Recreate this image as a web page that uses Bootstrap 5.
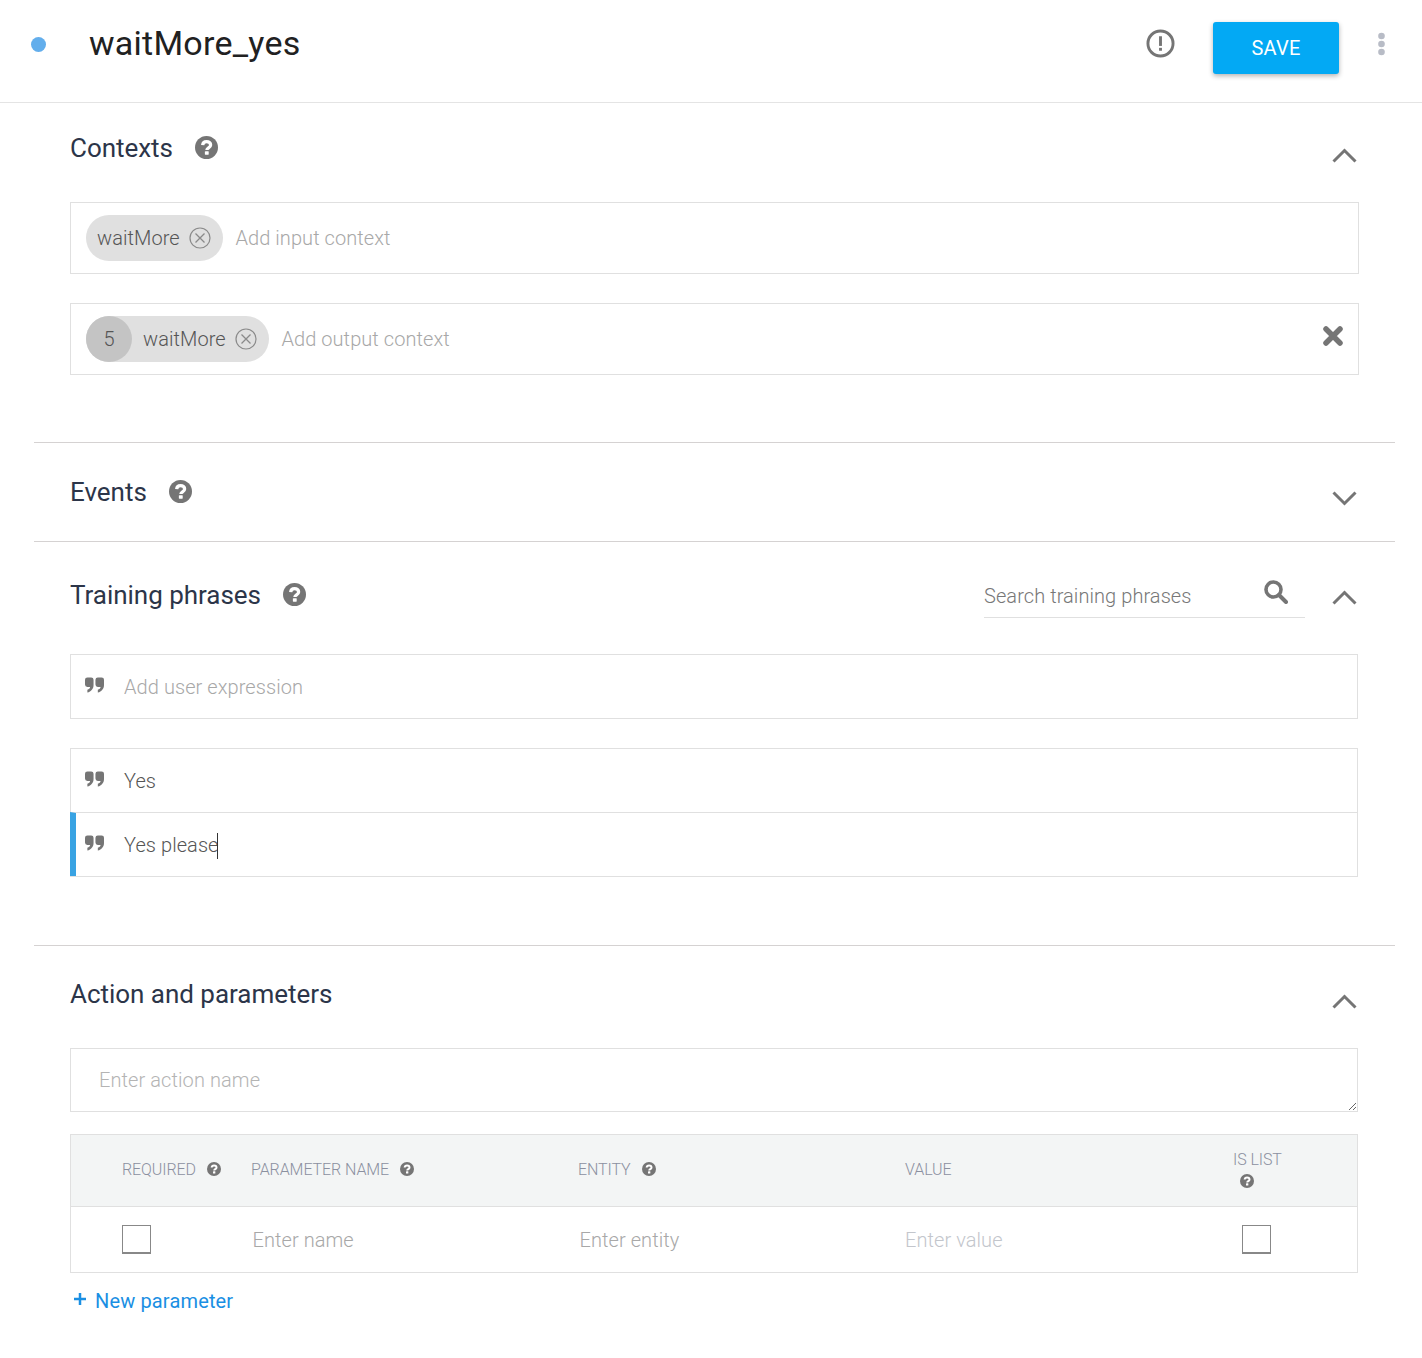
<!DOCTYPE html>
<html lang="en">
<head>
  <meta charset="UTF-8" />
  <title>waitMore_yes</title>
  <link rel="stylesheet" href="https://cdn.jsdelivr.net/npm/bootstrap@5.3.3/dist/css/bootstrap.min.css">
  <style>
    body { font-family: Roboto, "Liberation Sans", sans-serif; font-weight: 300; letter-spacing: .07px; color: #555; background: #fff; }
    .top-bar { height: 103px; border-bottom: 1px solid #e4e4e4; padding-right: 37px; }
    .status-dot { width: 15px; height: 15px; margin: 37px 0 0 31px; border-radius: 50%; background: #63aeec; }
    .intent-name { margin: 21px 0 0 43px; font-size: 34px; line-height: 44px; font-weight: 400; letter-spacing: .25px; color: #212121; }
    .issue-icon { width: 29px; height: 29px; margin-top: 29px; }
    .save-btn { width: 126px; height: 52px; margin: 22px 0 0 38px; padding: 0; font-size: 20px; line-height: 52px; letter-spacing: .2px; background: #03a9f4; border: 0; border-radius: 3px; box-shadow: 0 2px 5px rgba(0,0,0,.3); }
    .kebab-icon { width: 7px; height: 24px; margin: 32px 0 0 39px; }

    .editor { margin: 0 27px 0 34px; }
    .editor-sec { padding: 0 36px; border-top: 1px solid #d5d2d2; }
    .editor-sec.first-sec { border-top: 0; padding-bottom: 67px; }
    .sec-head { align-items: flex-start; }
    .sec-title { margin: 0; font-size: 26px; line-height: 36px; font-weight: 400; letter-spacing: -.03px; color: #2c3549; }
    .help-big { width: 23px; height: 23px; margin: 6px 0 0 22px; }
    .chevron { width: 25px; height: 15px; margin-right: 2px; }
    .head-contexts { height: 99px; padding-top: 27px; }
    .head-contexts .chevron { margin-top: 18px; }
    .head-events { height: 98px; padding-top: 31px; }
    .head-events .chevron { margin-top: 17px; }
    .head-training { height: 112px; padding-top: 35px; }
    .head-training .chevron { margin-top: 13px; }
    .head-action { height: 102px; padding-top: 30px; }
    .head-action .chevron { margin-top: 18px; }

    .line-box { height: 72px; padding: 0 15px; border: 1px solid #e0e0e0; }
    .line-box + .line-box { margin-top: 29px; }
    .ctx-chip { height: 46px; padding: 0 12px 0 11px; border-radius: 23px; background: #e0e0e0; font-size: 20px; }
    .ctx-chip.with-count { padding-left: 0; }
    .chip-count { width: 46px; height: 46px; margin-right: 11px; border-radius: 50%; background: #c4c4c4; }
    .chip-x { width: 22px; height: 22px; margin-left: 9.700px; }
    .plain-field { flex: 1; min-width: 0; padding: 0; border: 0; border-radius: 0; background: transparent; color: #555; font-size: 20px; font-weight: 300; letter-spacing: .07px; box-shadow: none !important; }
    .plain-field::placeholder { color: #a8a8a8; opacity: 1; }
    .plain-field.pale::placeholder { color: #c3c6cc; }
    .clear-x { width: 20px; height: 20px; margin-bottom: 6px; }

    .search-wrap { width: 321px; height: 41px; margin-right: 27px; padding-bottom: 2px; border-bottom: 1px solid #e0e0e0; }
    .search-wrap .plain-field::placeholder { color: #777; }
    .search-icon { width: 24px; height: 24px; margin: 3px 17px 0 0; flex: none; }
    .phrase-box { margin-right: 1px; border: 1px solid #e0e0e0; }
    .phrase-row { height: 63px; padding-left: 14px; }
    .phrase-row + .phrase-row { border-top: 1px solid #e0e0e0; height: 64px; }
    .phrase-row.active-row { margin-left: -1px; border-left: 6px solid #39a3e3; padding-left: 9px; }
    .quote-icon { width: 19px; height: 16px; margin: 0 20px 4px 0; flex: none; }
    .phrase-text { font-size: 20px; white-space: nowrap; }
    .text-caret { display: inline-block; width: 1px; height: 26px; margin: 0 0 -7px -2px; background: #333; }
    .gap-box { margin-bottom: 29px; }
    .gap-box .phrase-row { height: 63px; }
    .bottom-gap { height: 68px; }

    .action-field { display: block; width: 1288px; height: 64px; padding: 19px 28px 17px; border: 1px solid #e0e0e0; border-radius: 0; font-size: 20px; line-height: 24px; font-weight: 300; letter-spacing: .09px; color: #555; box-shadow: none !important; }
    .action-field::placeholder { color: #b4b4b4; opacity: 1; }
    .param-table { width: 1288px; margin: 22px 0 0; table-layout: fixed; border: 1px solid #e0e0e0; letter-spacing: -.08px; }
    .param-table th, .param-table td { padding: 0; border-bottom: 1px solid #e0e0e0; vertical-align: middle; box-shadow: none; }
    .param-table th { height: 72px; padding-bottom: 2px; background: #f3f5f5; font-size: 16px; font-weight: 300; line-height: 20px; color: #8b90a0; }
    .param-table td { height: 66px; border-bottom: 0; }
    .col-req { width: 180.500px; }
    .col-mid { width: 327px; }
    .pad-req { padding-left: 51px !important; }
    .pad-name { padding-left: 1.500px !important; }
    .param-table th.pad-list { padding: 0 0 4px 1px; }
    .help-small { width: 14px; height: 14px; margin: -2px 0 0 11px; }
    .help-under { display: block; margin: 4px 0 0 7px; }
    .tick-box { width: 29px; height: 29px; display: block; border: 1px solid #888; border-bottom-width: 2px; background: #fff; }
    .tick-list { margin-left: 10px; }
    .new-param { margin-top: 14px; margin-left: 3px; font-size: 20px; line-height: 28px; font-weight: 400; letter-spacing: .15px; color: #1a8fe3; text-decoration: none; }
    .plus-icon { width: 14px; height: 14px; margin: 0 8px 5px 0; }
  </style>
</head>
<body>
  <svg width="0" height="0" class="position-absolute">
    <symbol id="i-help" viewBox="0 0 24 24">
      <circle cx="12" cy="12" r="12" fill="#757575"/>
      <path d="M8 9.500C8.200 6.900 10 5.800 12.100 5.800c2.500 0 4.200 1.500 4.200 3.500 0 3-3.900 2.900-3.900 5.200" fill="none" stroke="#fff" stroke-width="3.400"/>
      <rect x="10.300" y="16" width="4" height="3.600" rx=".5" fill="#fff"/>
    </symbol>
    <symbol id="i-chip-x" viewBox="0 0 22 22">
      <circle cx="11" cy="11" r="10" fill="none" stroke="#8a8a8a" stroke-width="1.200"/>
      <path d="M6.500 6.500l9 9M15.500 6.500l-9 9" stroke="#8a8a8a" stroke-width="1.300"/>
    </symbol>
    <symbol id="i-quote" viewBox="0 0 20 16">
      <path id="q-mark" d="M0 2.500A2.500 2.500 0 0 1 2.500 0h4A2.500 2.500 0 0 1 9 2.500V8c0 4-2.500 7-6.500 8v-3c1.700-.6 2.700-1.600 2.900-3H2.500A2.500 2.500 0 0 1 0 7.500z" fill="#757575"/>
      <use href="#q-mark" x="11"/>
    </symbol>
  </svg>

  <!-- top bar -->
  <header class="top-bar d-flex align-items-start">
    <span class="status-dot"></span>
    <h1 class="intent-name">waitMore_yes</h1>
    <svg class="issue-icon ms-auto" viewBox="0 0 30 30">
      <circle cx="15" cy="15" r="13" fill="none" stroke="#757575" stroke-width="3"/>
      <rect x="13.500" y="7.500" width="3" height="10" fill="#757575"/>
      <rect x="13.500" y="19.500" width="3" height="3" fill="#757575"/>
    </svg>
    <button class="btn btn-primary save-btn">SAVE</button>
    <svg class="kebab-icon" viewBox="0 0 7 24">
      <circle cx="3.500" cy="4" r="3.300" fill="#b8bcc6"/>
      <circle cx="3.500" cy="12" r="3.300" fill="#b8bcc6"/>
      <circle cx="3.500" cy="20" r="3.300" fill="#b8bcc6"/>
    </svg>
  </header>

  <main class="editor">
    <!-- Contexts -->
    <section class="editor-sec first-sec">
      <div class="sec-head head-contexts d-flex">
        <h2 class="sec-title">Contexts</h2>
        <svg class="help-big"><use href="#i-help"/></svg>
        <svg class="chevron ms-auto" viewBox="0 0 25 15"><path d="M1.500 13.500l11-11 11 11" fill="none" stroke="#757575" stroke-width="3"/></svg>
      </div>
      <div class="line-box d-flex align-items-center">
        <span class="ctx-chip d-inline-flex align-items-center">waitMore<svg class="chip-x"><use href="#i-chip-x"/></svg></span>
        <input class="form-control plain-field ms-2 ps-1" placeholder="Add input context">
      </div>
      <div class="line-box d-flex align-items-center">
        <span class="ctx-chip with-count d-inline-flex align-items-center"><span class="chip-count d-flex align-items-center justify-content-center">5</span>waitMore<svg class="chip-x"><use href="#i-chip-x"/></svg></span>
        <input class="form-control plain-field ms-2 ps-1" placeholder="Add output context">
        <svg class="clear-x" viewBox="0 0 20 20"><path d="M3 3l14 14M17 3L3 17" stroke="#757575" stroke-width="5.500" stroke-linecap="round"/></svg>
      </div>
    </section>

    <!-- Events -->
    <section class="editor-sec">
      <div class="sec-head head-events d-flex">
        <h2 class="sec-title">Events</h2>
        <svg class="help-big"><use href="#i-help"/></svg>
        <svg class="chevron ms-auto" viewBox="0 0 25 15"><path d="M1.500 1.500l11 11 11-11" fill="none" stroke="#757575" stroke-width="3"/></svg>
      </div>
    </section>

    <!-- Training phrases -->
    <section class="editor-sec">
      <div class="sec-head head-training d-flex">
        <h2 class="sec-title">Training phrases</h2>
        <svg class="help-big"><use href="#i-help"/></svg>
        <div class="search-wrap d-flex ms-auto">
          <input class="form-control plain-field" placeholder="Search training phrases">
          <svg class="search-icon" viewBox="0 0 24 24"><circle cx="9.500" cy="9.500" r="7.500" fill="none" stroke="#757575" stroke-width="3.600"/><path d="M15 15l7 7" stroke="#757575" stroke-width="4" stroke-linecap="round"/></svg>
        </div>
        <svg class="chevron" viewBox="0 0 25 15"><path d="M1.500 13.500l11-11 11 11" fill="none" stroke="#757575" stroke-width="3"/></svg>
      </div>
      <div class="phrase-box gap-box">
        <div class="phrase-row d-flex align-items-center">
          <svg class="quote-icon"><use href="#i-quote"/></svg>
          <input class="form-control plain-field" placeholder="Add user expression">
        </div>
      </div>
      <div class="phrase-box">
        <div class="phrase-row d-flex align-items-center">
          <svg class="quote-icon"><use href="#i-quote"/></svg>
          <span class="phrase-text">Yes</span>
        </div>
        <div class="phrase-row active-row d-flex align-items-center">
          <svg class="quote-icon"><use href="#i-quote"/></svg>
          <span class="phrase-text">Yes please<span class="text-caret"></span></span>
        </div>
      </div>
      <div class="bottom-gap"></div>
    </section>

    <!-- Action and parameters -->
    <section class="editor-sec">
      <div class="sec-head head-action d-flex">
        <h2 class="sec-title">Action and parameters</h2>
        <svg class="chevron ms-auto" viewBox="0 0 25 15"><path d="M1.500 13.500l11-11 11 11" fill="none" stroke="#757575" stroke-width="3"/></svg>
      </div>
      <textarea class="form-control action-field" placeholder="Enter action name"></textarea>
      <table class="param-table">
        <colgroup><col class="col-req"><col class="col-mid"><col class="col-mid"><col class="col-mid"><col></colgroup>
        <thead>
          <tr>
            <th class="pad-req">REQUIRED<svg class="help-small"><use href="#i-help"/></svg></th>
            <th>PARAMETER NAME<svg class="help-small"><use href="#i-help"/></svg></th>
            <th>ENTITY<svg class="help-small"><use href="#i-help"/></svg></th>
            <th>VALUE</th>
            <th class="pad-list">IS LIST<svg class="help-small help-under"><use href="#i-help"/></svg></th>
          </tr>
        </thead>
        <tbody>
          <tr>
            <td class="pad-req"><span class="tick-box"></span></td>
            <td class="pad-name"><input class="form-control plain-field" placeholder="Enter name"></td>
            <td class="pad-name"><input class="form-control plain-field" placeholder="Enter entity"></td>
            <td><input class="form-control plain-field pale" placeholder="Enter value"></td>
            <td><span class="tick-box tick-list"></span></td>
          </tr>
        </tbody>
      </table>
      <a href="#" class="new-param d-inline-flex align-items-center">
        <svg class="plus-icon" viewBox="0 0 14 14"><path d="M7 1v12M1 7h12" stroke="#1a8fe3" stroke-width="2.500"/></svg>New parameter
      </a>
    </section>
  </main>
</body>
</html>
